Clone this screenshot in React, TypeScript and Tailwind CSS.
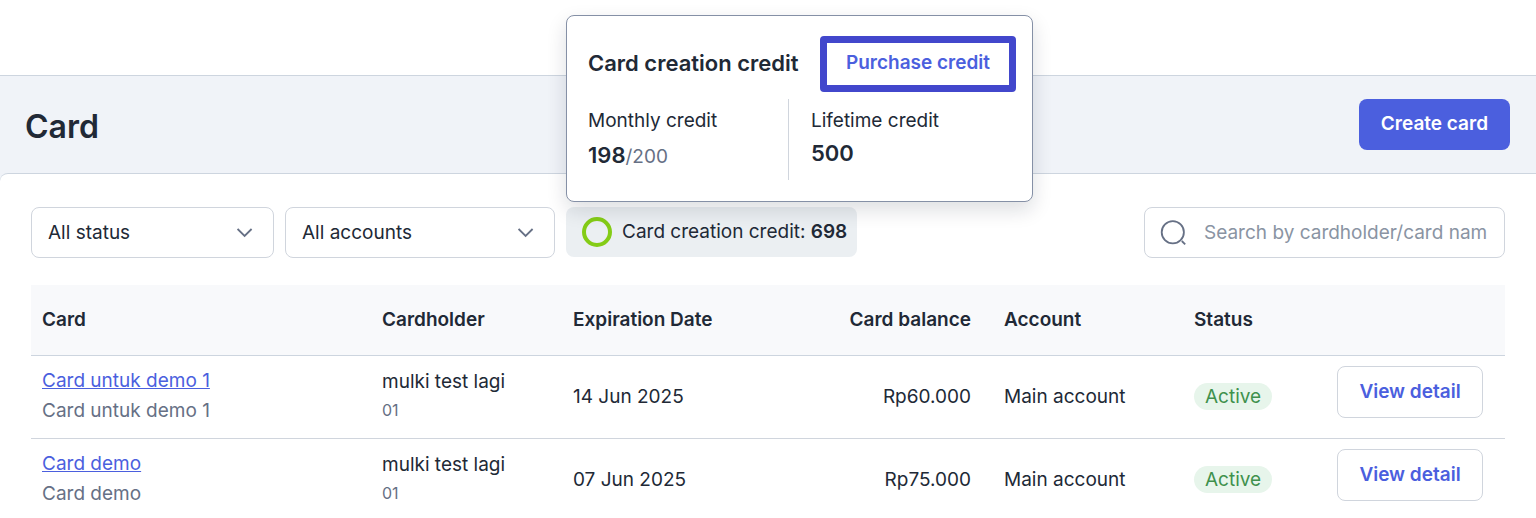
import React, { useState } from "react";

type CardRow = {
  name: string;
  alias: string;
  holder: string;
  holderId: string;
  expiry: string;
  balance: string;
  account: string;
  status: string;
};

const cards: CardRow[] = [
  {
    name: "Card untuk demo 1",
    alias: "Card untuk demo 1",
    holder: "mulki test lagi",
    holderId: "01",
    expiry: "14 Jun 2025",
    balance: "Rp60.000",
    account: "Main account",
    status: "Active",
  },
  {
    name: "Card demo",
    alias: "Card demo",
    holder: "mulki test lagi",
    holderId: "01",
    expiry: "07 Jun 2025",
    balance: "Rp75.000",
    account: "Main account",
    status: "Active",
  },
];

const ChevronIcon: React.FC = () => (
  <svg
    className="pointer-events-none absolute top-1/2 right-[21px] h-4 w-4 -translate-y-1/2"
    viewBox="0 0 16 16"
    fill="none"
    stroke="#667085"
    strokeWidth="1.8"
    aria-hidden="true"
  >
    <path d="M0.6 4 7.6 11l7-7" />
  </svg>
);

const SearchIcon: React.FC = () => (
  <svg
    className="h-7 w-7 shrink-0"
    viewBox="0 0 28 28"
    fill="none"
    stroke="#667085"
    strokeWidth="1.8"
    aria-hidden="true"
  >
    <circle cx="12.8" cy="13.3" r="11.1" />
    <path d="m21.8 22 3.4 3.4" />
  </svg>
);

type FilterProps = { label: string; option: string; className: string };

const Filter: React.FC<FilterProps> = ({ label, option, className }) => (
  <div className={`relative ${className}`}>
    <select
      aria-label={label}
      className="h-[51px] w-full appearance-none rounded-lg border border-[#d0d5dd] bg-white px-4 text-[#212936]"
    >
      <option>{option}</option>
    </select>
    <ChevronIcon />
  </div>
);

const CreditPopover: React.FC = () => (
  <div className="absolute bottom-full left-0 z-10 mb-[5px] w-[467px] rounded-lg border border-[#8590a6] bg-white pt-5 pr-4 pb-[21px] pl-[21px] shadow-[0_8px_20px_rgba(16,24,40,0.14)]">
    <div className="flex items-center justify-between">
      <h2 className="pb-[2px] text-[22px] leading-7 font-semibold">
        Card creation credit
      </h2>
      <button
        type="button"
        className="h-14 w-[196px] rounded-sm border-[7px] border-[#4247cc] pb-[2px] font-semibold text-[#4b5fde]"
      >
        Purchase credit
      </button>
    </div>
    <div className="mt-[7px] flex h-[81px]">
      <div className="w-[201px] border-r border-[#d0d5dd] pt-2">
        <p className="leading-7">Monthly credit</p>
        <p className="mt-1 leading-8 text-[#667085]">
          <span className="text-[22px] font-semibold text-[#212936]">198</span>
          /200
        </p>
      </div>
      <div className="pt-2 pl-[22px]">
        <p className="leading-7">Lifetime credit</p>
        <p className="mt-[2px] text-[22px] leading-8 font-semibold">500</p>
      </div>
    </div>
  </div>
);

const CreditBadge: React.FC = () => {
  const [isOpen, setIsOpen] = useState(true);

  return (
    <div className="relative">
      <button
        type="button"
        onClick={() => setIsOpen(!isOpen)}
        className="flex h-[50px] items-center gap-[10px] rounded-lg bg-[#ebeff2] pr-[10px] pl-4"
      >
        <span className="h-[30px] w-[30px] rounded-full border-4 border-[#84cc16]" />
        <span>
          Card creation credit: <b className="font-semibold">698</b>
        </span>
      </button>
      {isOpen && <CreditPopover />}
    </div>
  );
};

const App: React.FC = () => {
  const [search, setSearch] = useState("");

  return (
    <div className="overflow-x-hidden bg-[#f0f3f8] font-['Inter',sans-serif] text-[19px] leading-7 text-[#212936]">
      <header className="h-[76px] border-b border-[#cdd5df] bg-white" />
      <div className="flex h-[97px] items-center justify-between pr-[26px] pl-[25px]">
        <h1 className="pt-1 text-[32px] leading-10 font-semibold">Card</h1>
        <button
          type="button"
          className="h-[51px] rounded-lg bg-[#4b5fde] px-[22px] pb-[2px] font-semibold text-white"
        >
          Create card
        </button>
      </div>

      <main className="min-h-[345px] rounded-tl-lg border-t border-[#cdd5df] bg-white px-[31px] pt-[33px]">
        <div className="flex items-start gap-[11px]">
          <Filter label="Status" option="All status" className="w-[243px]" />
          <Filter label="Account" option="All accounts" className="w-[270px]" />
          <CreditBadge />
          <label className="ml-auto flex h-[51px] w-[361px] items-center gap-4 rounded-lg border border-[#d0d5dd] px-[15px]">
            <SearchIcon />
            <input
              type="text"
              aria-label="Search cards"
              value={search}
              onChange={(e) => setSearch(e.target.value)}
              placeholder="Search by cardholder/card nam"
              className="min-w-0 flex-1 outline-none placeholder:text-[#8a94a3]"
            />
          </label>
        </div>

        <table className="mt-[27px] w-full table-fixed text-left">
          <colgroup>
            <col />
            <col className="w-[191px]" />
            <col className="w-[191px]" />
            <col className="w-[240px]" />
            <col className="w-[190px]" />
            <col className="w-[143px]" />
            <col className="w-[179px]" />
          </colgroup>
          <thead>
            <tr className="h-[70px] border-b border-[#cdd5df] bg-[#f8f9fb]">
              <th className="px-[11px] font-semibold">Card</th>
              <th className="px-[11px] font-semibold">Cardholder</th>
              <th className="px-[11px] font-semibold">Expiration Date</th>
              <th className="pr-[22px] text-right font-semibold">
                Card balance
              </th>
              <th className="px-[11px] font-semibold">Account</th>
              <th className="px-[11px] font-semibold">Status</th>
              <th aria-label="Actions" />
            </tr>
          </thead>
          <tbody>
            {cards.map((card) => (
              <tr key={card.name} className="h-[83px] border-b border-[#d0d5dd]">
                <td className="px-[11px] pb-[2px]">
                  <a href="#" className="block text-[#4b5fde] underline">
                    {card.name}
                  </a>
                  <p className="mt-[2px] text-[#667085]">{card.alias}</p>
                </td>
                <td className="px-[11px] pb-[2px]">
                  <p>{card.holder}</p>
                  <p className="text-base leading-7 text-[#667085]">
                    {card.holderId}
                  </p>
                </td>
                <td className="px-[11px]">{card.expiry}</td>
                <td className="pr-[22px] text-right">{card.balance}</td>
                <td className="px-[11px]">{card.account}</td>
                <td className="px-[11px]">
                  <span className="inline-block rounded-full bg-[#e7f5eb] px-[11px] leading-[27px] text-[#3f914d]">
                    {card.status}
                  </span>
                </td>
                <td className="px-[11px] pb-[10px]">
                  <button
                    type="button"
                    className="h-[52px] w-[146px] rounded-lg border border-[#d0d5dd] font-semibold text-[#4b5fde]"
                  >
                    View detail
                  </button>
                </td>
              </tr>
            ))}
          </tbody>
        </table>
      </main>
    </div>
  );
};

export default App;
